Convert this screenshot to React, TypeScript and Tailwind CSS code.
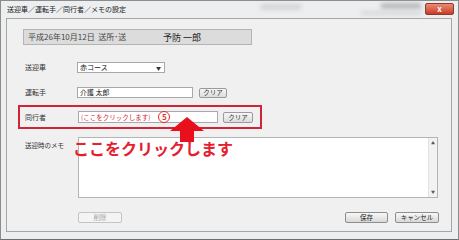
import React from 'react';

const font = { fontFamily: '"Noto Sans CJK JP", "Noto Sans", sans-serif' };

function ClearButton({ className = '' }: { className?: string }) {
  return (
    <div
      className={`flex items-center justify-center border border-[#9a9a9a] bg-gradient-to-b from-[#f6f6f6] to-[#dcdcdc] rounded-[2px] text-[6.5px] text-[#333] leading-none ${className}`}
    >
      クリア
    </div>
  );
}

function DialogButton({ label, disabled, className = '' }: { label: string; disabled?: boolean; className?: string }) {
  return (
    <div
      className={`flex items-center justify-center rounded-[2px] text-[6.5px] leading-none h-[11px] ${
        disabled
          ? 'border border-[#c4c4c4] bg-[#f4f4f4] text-[#a8a8a8]'
          : 'border border-[#8e8e8e] bg-gradient-to-b from-[#f8f8f8] to-[#d8d8d8] text-[#222]'
      } ${className}`}
    >
      {label}
    </div>
  );
}

export default function App() {
  return (
    <div className="relative w-[459px] h-[240px] overflow-hidden bg-white" style={font}>
      {/* window frame */}
      <div className="flex flex-col w-[459px] h-[240px] bg-[#eceef0] border border-[#8c8c8c] border-b-[#6e6e6e]">
        {/* title bar */}
        <div className="relative flex items-center h-[17px] pl-[6px]">
          <span className="text-[7px] text-[#222] leading-none">送迎車／運転手／同行者／メモの設定</span>
          <div className="absolute left-[260px] top-[3px] w-[40px] h-[6px] bg-[#d4d6d8] blur-[2px]" />
          <div className="absolute left-[380px] top-[2px] w-[40px] h-[6px] bg-[#b8babc] blur-[2px]" />
          <div className="absolute left-[360px] top-[10px] w-[60px] h-[4px] bg-[#d6d8da] blur-[2px]" />
          <div className="absolute right-[4px] top-[2px] flex items-center justify-center w-[29px] h-[12px] rounded-[2px] bg-gradient-to-b from-[#ec8a70] to-[#c73a28] border border-[#8a3a30]">
            <span className="text-white text-[8px] font-bold leading-none">x</span>
          </div>
        </div>

        {/* client area */}
        <div className="relative flex flex-col ml-[5px] mr-[6px] h-[214px] bg-[#f0f0f0] border border-[#a6a6a6]">
          {/* header strip */}
          <div className="flex items-center ml-[16px] mt-[10px] w-[229px] h-[16px] bg-[#dcdcdc] border border-[#b4b4b4] px-[4px]">
            <span className="text-[8px] text-[#444] leading-none w-[135px]">平成26年10月12日&nbsp; 送所･送</span>
            <span className="text-[9px] text-[#222] leading-none">予防 一郎</span>
          </div>

          {/* 送迎車 */}
          <div className="flex items-center mt-[17px] pl-[18px] h-[11px]">
            <span className="w-[52px] text-[7px] text-[#333] leading-none">送迎車</span>
            <div className="flex items-center justify-between w-[88px] h-[11px] bg-white border border-[#a8a8a8] pl-[2px] pr-[3px]">
              <span className="text-[7px] text-[#222] leading-none">赤コース</span>
              <span className="text-[5px] text-[#333] leading-none">▼</span>
            </div>
          </div>

          {/* 運転手 */}
          <div className="flex items-center mt-[14px] pl-[18px] h-[11px]">
            <span className="w-[52px] text-[7px] text-[#333] leading-none">運転手</span>
            <div className="flex items-center w-[116px] h-[11px] bg-white border border-[#a8a8a8] pl-[2px]">
              <span className="text-[7px] text-[#222] leading-none">介護 太郎</span>
            </div>
            <ClearButton className="ml-[6px] w-[28px] h-[10px]" />
          </div>

          {/* 同行者 (highlighted) */}
          <div className="flex items-center mt-[7px] ml-[11px] w-[244px] h-[24px] border-2 border-[#d02438] pl-[5px]">
            <span className="w-[53px] text-[7px] text-[#333] leading-none">同行者</span>
            <div className="flex items-center w-[140px] h-[12px] bg-white border border-[#a8a8a8] pl-[2px]">
              <span className="text-[6.5px] text-[#d02438] leading-none">(ここをクリックします)</span>
              <span className="ml-[8px] flex items-center justify-center w-[12px] h-[12px] rounded-full border border-[#e0302c] text-[8px] font-bold text-[#e0302c] leading-none">5</span>
            </div>
            <ClearButton className="ml-[5px] w-[30px] h-[11px]" />
          </div>

          {/* memo */}
          <div className="flex mt-[8px] pl-[18px]">
            <span className="w-[53px] pt-[5px] text-[6.5px] text-[#333] leading-none">送迎時のメモ</span>
            <div className="flex w-[360px] h-[61px] bg-white border border-[#b4b4b4]">
              <div className="flex-1" />
              <div className="flex flex-col items-center justify-between w-[9px] bg-[#f2f2f2] border-l border-[#e2e2e2] py-[3px]">
                <span className="text-[4px] text-[#555] leading-none">▲</span>
                <span className="text-[4px] text-[#555] leading-none">▼</span>
              </div>
            </div>
          </div>

          {/* buttons */}
          <div className="flex items-center mt-[14px] pl-[71px] pr-[12px]">
            <DialogButton label="削除" disabled className="w-[44px]" />
            <div className="flex-1" />
            <DialogButton label="保存" className="w-[43px]" />
            <DialogButton label="キャンセル" className="ml-[7px] w-[44px]" />
          </div>
        </div>
      </div>

      {/* annotation: arrow + callout */}
      <svg className="absolute left-[169px] top-[117px]" width="36" height="25" viewBox="0 0 36 25">
        <path d="M18 0 L35 14 L25 14 L25 25 L11 25 L11 14 L1 14 Z" fill="#e8101c" />
      </svg>
      <div className="absolute left-[73px] top-[140px] text-[16px] font-bold text-[#e4202e] leading-none whitespace-nowrap">
        ここをクリックします
      </div>
    </div>
  );
}
